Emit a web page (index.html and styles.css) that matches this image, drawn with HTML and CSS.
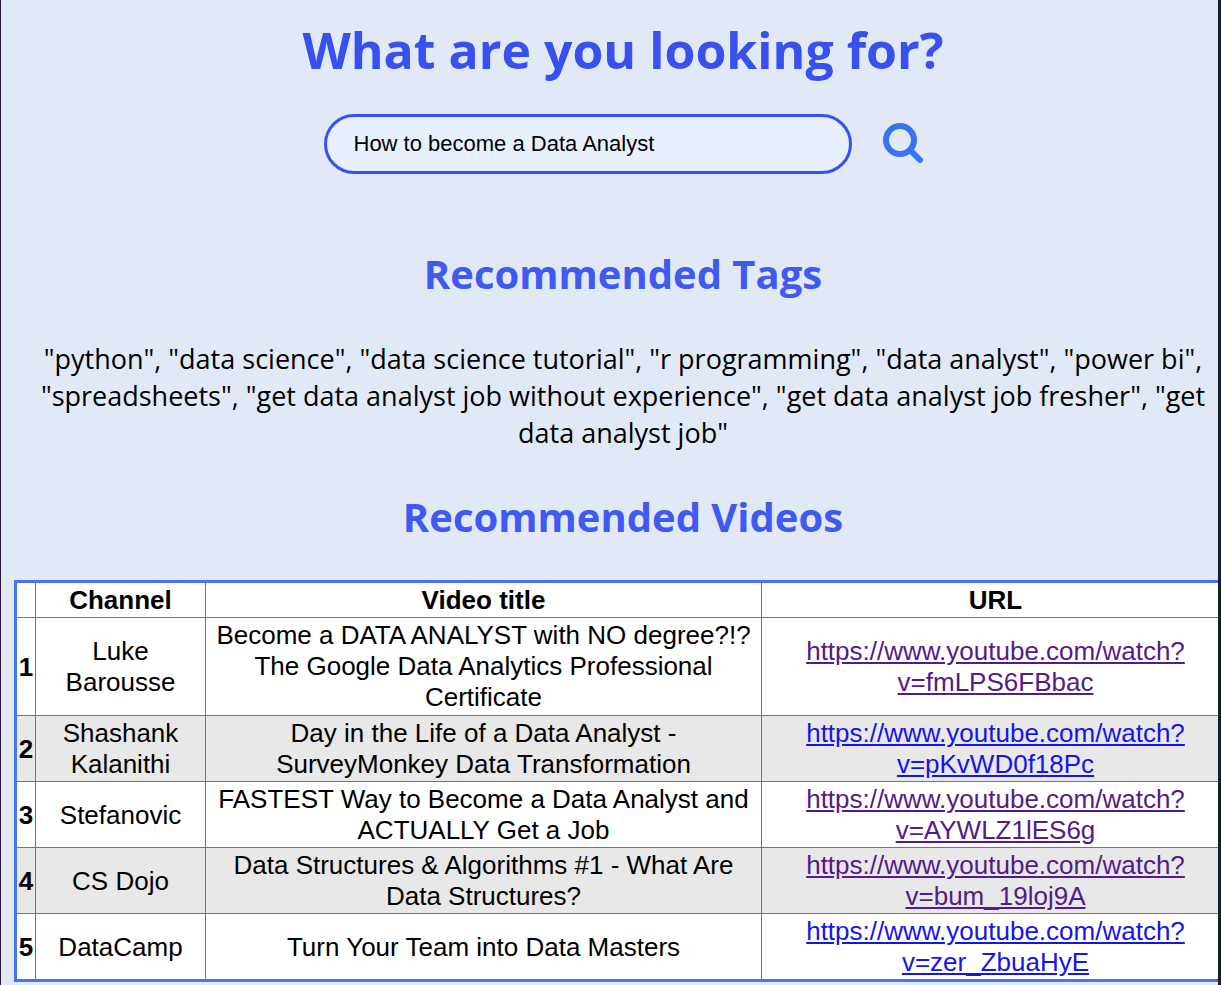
FILE: index.html
```
<!DOCTYPE html>
<html lang="en">
<head>
<meta charset="utf-8">
<title>Video recommendations</title>
<link rel="stylesheet" href="styles.css">
</head>
<body>
<main class="page">
<div class="content">
<h1 class="title"><label for="query">What are you looking for?</label></h1>
<form class="search">
<input class="search-input" id="query" type="text" value="How to become a Data Analyst">
<button class="search-button" type="button" aria-label="Search">
<svg width="40" height="42" viewBox="0 0 40 42" fill="none" stroke="#3873f0" stroke-width="6" stroke-linecap="round"><circle cx="17" cy="17" r="14"/><path d="M28 28l9 9"/></svg>
</button>
</form>
<h2 class="heading">Recommended Tags</h2>
<p class="tags">"python", "data science", "data science tutorial", "r programming", "data analyst", "power bi", "spreadsheets", "get data analyst job without experience", "get data analyst job fresher", "get data analyst job"</p>
<h2 class="heading">Recommended Videos</h2>
<table class="videos">
<colgroup><col class="col-index"><col class="col-channel"><col class="col-title"><col class="col-url"></colgroup>
<thead>
<tr><th></th><th>Channel</th><th>Video title</th><th>URL</th></tr>
</thead>
<tbody>
<tr><th>1</th><td>Luke Barousse</td><td>Become a DATA ANALYST with NO degree?!? The Google Data Analytics Professional Certificate</td><td><a class="link seen" href="#v1">https://www.youtube.com/watch?<wbr>v=fmLPS6FBbac</a></td></tr>
<tr><th>2</th><td>Shashank Kalanithi</td><td>Day in the Life of a Data Analyst - SurveyMonkey Data Transformation</td><td><a class="link" href="#v2">https://www.youtube.com/watch?<wbr>v=pKvWD0f18Pc</a></td></tr>
<tr><th>3</th><td>Stefanovic</td><td>FASTEST Way to Become a Data Analyst and ACTUALLY Get a Job</td><td><a class="link seen" href="#v3">https://www.youtube.com/watch?<wbr>v=AYWLZ1lES6g</a></td></tr>
<tr><th>4</th><td>CS Dojo</td><td>Data Structures &amp; Algorithms #1 - What Are Data Structures?</td><td><a class="link seen" href="#v4">https://www.youtube.com/watch?<wbr>v=bum_19loj9A</a></td></tr>
<tr><th>5</th><td>DataCamp</td><td>Turn Your Team into Data Masters</td><td><a class="link" href="#v5">https://www.youtube.com/watch?<wbr>v=zer_ZbuaHyE</a></td></tr>
</tbody>
</table>
</div>
</main>
</body>
</html>
```
FILE: styles.css
```
* { box-sizing: border-box; }
body { margin: 0; background: #e2e9f6; color: #000; font-family: "Liberation Sans", Arial, sans-serif; }
.page { min-height: 100vh; overflow: hidden; border-left: 1px solid #26163a; border-right: 3px solid #171c2b; }
.content { margin: 0 -14px 0 13px; padding-top: 14px; text-align: center; }
.title, .heading, .tags { font-family: "Comic Sans MS", "Open Sans", sans-serif; }
.title { margin: 0; color: #3750ee; font-size: 50px; line-height: 72px; font-weight: 700; }
.search { display: flex; justify-content: center; align-items: center; gap: 31px; margin-top: 28px; }
.search-input { width: 528px; height: 60px; padding: 0 27px; border: 3px solid #3750f5; border-radius: 30px; background: #e8f0fe; color: #000; font: 22px "Liberation Sans", Arial, sans-serif; outline: 0; }
.search-button { display: flex; padding: 0; border: 0; background: none; }
.heading { margin: 0; padding-top: 68px; color: #4059f0; font-size: 40px; line-height: 64px; font-weight: 700; }
.tags { margin: 0; padding: 34px 8px 0; font-size: 27px; line-height: 37px; }
.tags + .heading { padding-top: 34px; }
.videos { width: 100%; margin-top: 31px; border-collapse: collapse; table-layout: fixed; border: 3px solid #4974f0; background: #fff; font-size: 26px; line-height: 31px; }
.col-index { width: 20px; }
.col-channel { width: 170px; }
.col-title { width: 556px; }
.videos th, .videos td { padding: 2px 1px 1px; border: 1px solid #4974e8; }
.videos tbody tr:first-child td { padding-bottom: 2px; }
.videos tbody tr:nth-child(even) { background: #e8e8e8; }
.link { color: #1414ee; }
.link.seen { color: #551a8b; }
```
